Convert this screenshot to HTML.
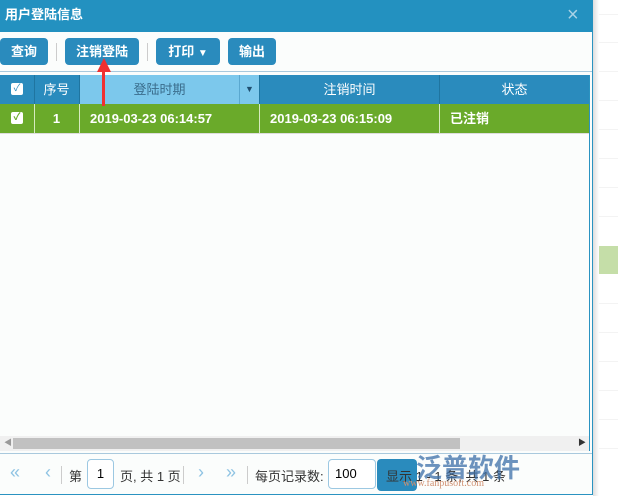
<!DOCTYPE html><html><head><meta charset="utf-8"><style>
body{margin:0;width:618px;height:496px;background:#fff;position:relative;overflow:hidden;font-family:"Liberation Sans","Noto Sans CJK SC",sans-serif;font-size:13px}
.a{position:absolute}
.btn{position:absolute;top:38px;height:27px;background:#2a8bbd;color:#fff;border-radius:4px;font-size:13px;font-weight:bold;line-height:27px;text-align:center}
.hl{position:absolute;height:1px;background:#f3f3f3;left:594px;width:24px}
.th{position:absolute;top:75px;height:29px;line-height:29px;color:#fff;text-align:center;font-size:13px;border-right:1px solid #1f75a0}
.td{position:absolute;top:104px;height:29px;line-height:29px;color:#fff;font-size:13px;font-weight:bold;border-right:1px solid #d6eac0}
.cb{position:absolute;width:12px;height:12px;background:#fff;border-radius:2px;color:#6aaa2a;font-size:10px;line-height:12px;text-align:center}
</style></head><body>
<div class="hl" style="top:14px"></div><div class="hl" style="top:42px"></div><div class="hl" style="top:71px"></div><div class="hl" style="top:100px"></div><div class="hl" style="top:129px"></div><div class="hl" style="top:158px"></div><div class="hl" style="top:187px"></div><div class="hl" style="top:216px"></div><div class="hl" style="top:303px"></div><div class="hl" style="top:332px"></div><div class="hl" style="top:361px"></div><div class="hl" style="top:390px"></div><div class="hl" style="top:419px"></div><div class="hl" style="top:448px"></div>
<div class="a" style="left:594px;top:246px;width:24px;height:28px;background:#c5dea8"></div>
<div class="a" style="left:593px;top:0;width:6px;height:496px;background:linear-gradient(90deg,#ddd,#fff)"></div>
<div class="a" style="left:0;top:0;width:592px;height:494px;background:#fbfdfc;border-right:1px solid #2a93c1;border-bottom:1px solid #2a93c1"></div>
<div class="a" style="left:0;top:0;width:593px;height:32px;background:#2391c0;color:#fff;font-size:13px;font-weight:bold;line-height:30px;padding-left:5px;box-sizing:border-box">用户登陆信息</div>
<div class="a" style="left:567px;top:4px;color:#a9d2e6;font-size:20px">×</div>
<div class="btn" style="left:0;width:48px">查询</div>
<div class="a" style="left:56px;top:43px;width:1px;height:18px;background:#ccc"></div>
<div class="btn" style="left:65px;width:74px">注销登陆</div>
<div class="a" style="left:147px;top:43px;width:1px;height:18px;background:#ccc"></div>
<div class="btn" style="left:156px;width:64px">打印 <span style="font-size:10px">▼</span></div>
<div class="btn" style="left:228px;width:48px">输出</div>
<div class="a" style="left:0;top:71px;width:592px;height:1px;background:#a9c9dd"></div>
<div class="a" style="left:0;top:75px;width:589px;height:29px;background:#2a8bbd"></div>
<div class="th" style="left:0;width:34px"><div class="cb" style="left:11px;top:8px;color:#2a8bbd">✓</div></div>
<div class="th" style="left:34px;width:45px">序号</div>
<div class="th" style="left:80px;width:159px;background:#7cc8ec;color:#3a6d8c;border-right:1px solid #5aa8d0">登陆时期</div>
<div class="th" style="left:240px;width:19px;background:#7cc8ec;color:#1f4f70;font-size:9px">▼</div>
<div class="th" style="left:260px;width:179px">注销时间</div>
<div class="th" style="left:440px;width:149px;border:0">状态</div>
<div class="a" style="left:0;top:104px;width:589px;height:29px;background:#6aaa2a"></div>
<div class="td" style="left:0;width:34px"><div class="cb" style="left:11px;top:8px">✓</div></div>
<div class="td" style="left:34px;width:45px;text-align:center">1</div>
<div class="td" style="left:80px;width:169px;padding-left:10px">2019-03-23 06:14:57</div>
<div class="td" style="left:260px;width:169px;padding-left:10px">2019-03-23 06:15:09</div>
<div class="td" style="left:440px;width:139px;padding-left:10px;border:0">已注销</div>
<div class="a" style="left:0;top:133px;width:589px;height:1px;background:#ddd"></div>
<div class="a" style="left:589px;top:75px;width:1px;height:376px;background:#2a93c1"></div>
<div class="a" style="left:0;top:436px;width:589px;height:15px;background:#f0f0f0"></div>
<div class="a" style="left:13px;top:438px;width:447px;height:11px;background:#c1c1c1"></div>
<div class="a" style="left:4px;top:437px;color:#999;font-size:8px">◀</div>
<div class="a" style="left:578px;top:437px;color:#333;font-size:8px">▶</div>
<div class="a" style="left:0;top:453px;width:592px;height:1px;background:#a9c9dd"></div>
<div class="a" style="left:10px;top:462px;color:#8ec3e3;font-size:18px">«</div>
<div class="a" style="left:45px;top:462px;color:#8ec3e3;font-size:18px">‹</div>
<div class="a" style="left:61px;top:466px;width:1px;height:18px;background:#ccc"></div>
<div class="a" style="left:69px;top:466px;font-size:13px;color:#333">第</div>
<div class="a" style="left:87px;top:459px;width:25px;height:28px;border:1px solid #9cc8e2;border-radius:4px;text-align:center;line-height:28px;background:#fff">1</div>
<div class="a" style="left:120px;top:466px;font-size:13px;color:#333">页, 共 1 页</div>
<div class="a" style="left:183px;top:466px;width:1px;height:18px;background:#ccc"></div>
<div class="a" style="left:198px;top:462px;color:#8ec3e3;font-size:18px">›</div>
<div class="a" style="left:226px;top:462px;color:#8ec3e3;font-size:18px">»</div>
<div class="a" style="left:247px;top:466px;width:1px;height:18px;background:#ccc"></div>
<div class="a" style="left:255px;top:466px;font-size:13px;color:#333">每页记录数:</div>
<div class="a" style="left:328px;top:459px;width:40px;height:28px;border:1px solid #9cc8e2;border-radius:4px;padding-left:6px;line-height:28px;background:#fff">100</div>
<div class="a" style="left:377px;top:459px;width:40px;height:32px;background:#2a8bbd;border-radius:4px"></div>
<div class="a" style="left:386px;top:466px;font-size:13px;color:#333">显示 1 - 1 条, 共 1 条</div>
<div class="a" style="left:416px;top:448px;font-size:26px;color:#3b6fa8;opacity:.75;font-weight:bold">泛普软件</div>
<div class="a" style="left:403px;top:478px;font-size:10px;color:#d09070;font-family:'Liberation Serif',serif">www.fanpusoft.com</div>
<div class="a" style="left:97px;top:58px;width:0;height:0;border-left:7px solid transparent;border-right:7px solid transparent;border-bottom:14px solid #f03030"></div>
<div class="a" style="left:102px;top:70px;width:3px;height:36px;background:#f03030"></div>
</body></html>
